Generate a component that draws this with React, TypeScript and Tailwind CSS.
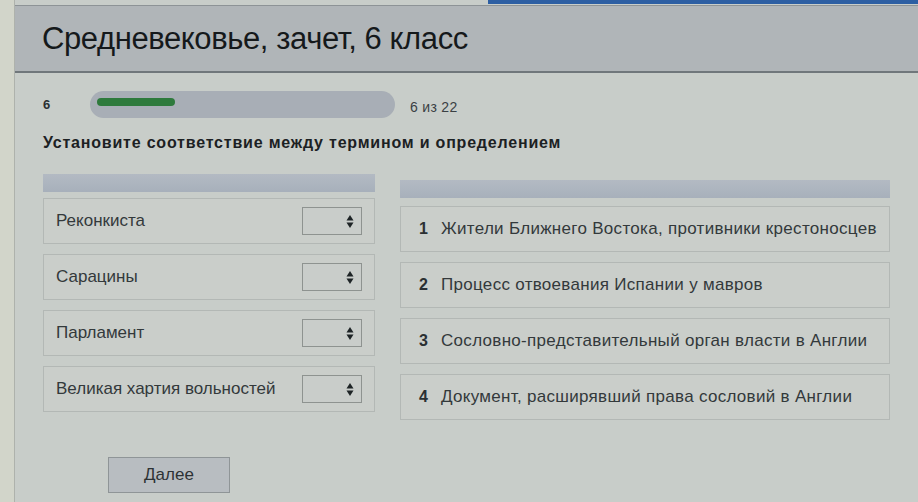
import React from 'react';

const terms = ['Реконкиста', 'Сарацины', 'Парламент', 'Великая хартия вольностей'];

const definitions = [
  'Жители Ближнего Востока, противники крестоносцев',
  'Процесс отвоевания Испании у мавров',
  'Сословно-представительный орган власти в Англии',
  'Документ, расширявший права сословий в Англии',
];

function SelectBox() {
  return (
    <div className="w-[60px] h-[28px] border border-[#8e9390] bg-[#c9cdca] flex items-center justify-end pr-[7px]">
      <svg width="8" height="13" viewBox="0 0 8 13">
        <path d="M4 0 L7.5 5.5 L0.5 5.5 Z" fill="#1e2426" />
        <path d="M4 13 L7.5 7.5 L0.5 7.5 Z" fill="#1e2426" />
      </svg>
    </div>
  );
}

export default function App() {
  return (
    <div
      className="relative w-[918px] h-[502px] overflow-hidden flex bg-[#c8cdc9] text-[#2a2f31]"
      style={{ fontFamily: '"Liberation Sans", Arial, sans-serif' }}
    >
      {/* синяя полоска сверху */}
      <div className="absolute top-0 right-0 w-[430px] h-[4px] bg-[#2d5fa3]" />

      <div className="w-[15px] shrink-0 bg-[#d2d5ca] border-r border-[#aeb2ac]" />

      <div className="flex-1 flex flex-col">
        {/* заголовок */}
        <div className="h-[68px] mt-[5px] bg-[#b0b5b8] border-t border-[#8d9396] border-b-2 border-b-[#70777b] flex items-center pl-[27px]">
          <h1 className="text-[31px] leading-none tracking-[-0.4px] text-[#15191b]">
            Средневековье, зачет, 6 класс
          </h1>
        </div>

        <div className="pl-[28px] pr-[28px]">
          {/* прогресс */}
          <div className="flex items-center mt-[18px] h-[27px]">
            <span className="w-[47px] text-[13px] font-bold text-[#2b3033]">6</span>
            <div className="w-[305px] h-[27px] rounded-full bg-[#a8aeb6] pt-[7px] pl-[7px]">
              <div className="w-[78px] h-[8px] rounded-full bg-[#2e7a3d]" />
            </div>
            <span className="ml-[15px] mt-[6px] text-[14px] tracking-[0.3px] text-[#3a4043]">6 из 22</span>
          </div>

          {/* вопрос */}
          <div className="mt-[13px] text-[16px] font-bold text-[#1c2123] tracking-[0.8px]">
            Установите соответствие между термином и определением
          </div>

          {/* колонки */}
          <div className="flex gap-[25px] mt-[19px]">
            <div className="w-[332px] flex flex-col">
              <div className="h-[18px] bg-gradient-to-b from-[#b3bac3] to-[#a7b0bb]" />
              <div className="flex flex-col gap-[10px] mt-[6px]">
                {terms.map((t) => (
                  <div
                    key={t}
                    className="h-[46px] border border-[#b3b8b5] bg-[#caceca] flex items-center justify-between pl-[12px] pr-[12px]"
                  >
                    <span className="text-[17px] text-[#33393b]">{t}</span>
                    <SelectBox />
                  </div>
                ))}
              </div>
            </div>

            <div className="w-[490px] flex flex-col mt-[6px]">
              <div className="h-[18px] bg-gradient-to-b from-[#b3bac3] to-[#a7b0bb]" />
              <div className="flex flex-col gap-[10px] mt-[8px]">
                {definitions.map((d, i) => (
                  <div
                    key={d}
                    className="h-[46px] border border-[#b3b8b5] bg-[#caceca] flex items-center pl-[18px]"
                  >
                    <span className="w-[22px] text-[16px] font-bold text-[#2b3033]">{i + 1}</span>
                    <span className="text-[17px] tracking-[0.3px] text-[#33393b]">{d}</span>
                  </div>
                ))}
              </div>
            </div>
          </div>

          {/* кнопка */}
          <button className="mt-[37px] ml-[65px] w-[122px] h-[36px] border border-[#8f9597] bg-[#b8bdc1] text-[17px] text-[#2d3235]">
            Далее
          </button>
        </div>
      </div>
    </div>
  );
}
